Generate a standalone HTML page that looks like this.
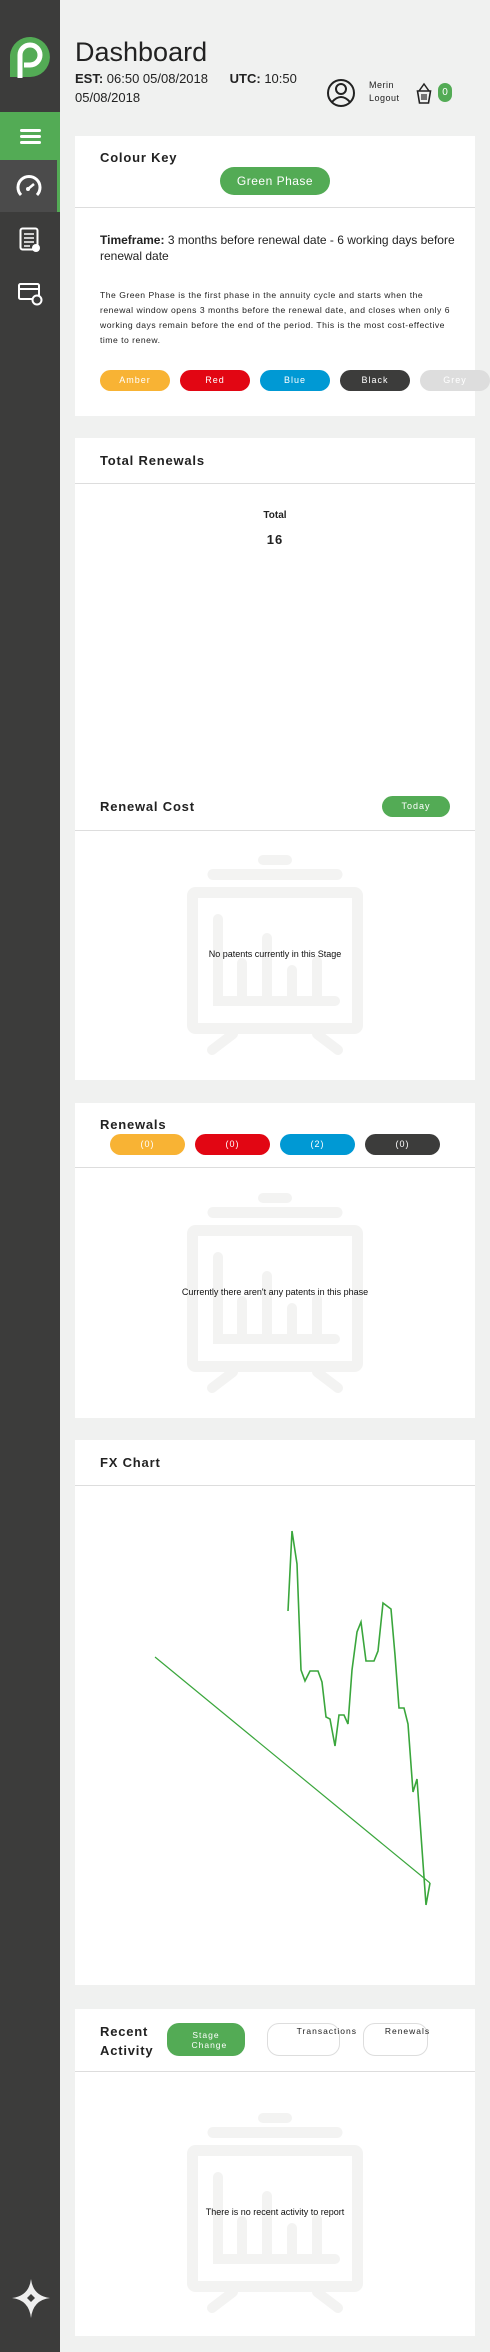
<!DOCTYPE html>
<html><head><meta charset="utf-8"><style>
*{margin:0;padding:0;box-sizing:border-box}
body{width:490px;height:2352px;background:#f0f1f0;font-family:"Liberation Sans",Arial,sans-serif;color:#222;position:relative;overflow:hidden}
.a{position:absolute}
.side{left:0;top:0;width:60px;height:2352px;background:#3c3c3b}
.card{position:absolute;left:75px;width:400px;background:#fff}
.t{position:absolute;font-weight:bold;font-size:13px;letter-spacing:0.8px;color:#222;white-space:nowrap}
.hr{position:absolute;left:0;width:400px;height:1px;background:#ddd}
.pill{position:absolute;border-radius:12px;color:#fff;text-align:center;font-size:9px;letter-spacing:1px}
.msg{position:absolute;left:0;width:400px;text-align:center;font-size:9px;color:#111}
</style></head><body>
<div class="a side"></div>
<svg class="a" style="left:10px;top:35px" width="40" height="43" viewBox="0 0 40 43">
<path d="M0 43V20A20 20 0 1 1 20 42H0Z" fill="#53ab55"/>
<path d="M10 43V20A10 10 0 1 1 20 30H14" fill="none" stroke="#fff" stroke-width="5"/>
</svg>
<div class="a" style="left:0;top:112px;width:60px;height:48px;background:#53ab55"></div>
<div class="a" style="left:20px;top:129px;width:21px;height:3px;background:#fff;border-radius:2px"></div>
<div class="a" style="left:20px;top:135px;width:21px;height:3px;background:#fff;border-radius:2px"></div>
<div class="a" style="left:20px;top:141px;width:21px;height:3px;background:#fff;border-radius:2px"></div>
<div class="a" style="left:0;top:160px;width:57px;height:52px;background:#4b4b4b"></div>
<div class="a" style="left:57px;top:160px;width:3px;height:52px;background:#53ab55"></div>
<svg class="a" style="left:16px;top:174px" width="26" height="24" viewBox="0 0 26 24"><path d="M5 21A11 11 0 1 1 21 21" fill="none" stroke="#fff" stroke-width="3"/><path d="M12 15L18 10" stroke="#fff" stroke-width="2.5"/><circle cx="12" cy="15" r="2" fill="#fff"/></svg>
<svg class="a" style="left:19px;top:227px" width="22" height="26" viewBox="0 0 22 26"><rect x="1.5" y="1.5" width="17" height="21" rx="2" fill="none" stroke="#fff" stroke-width="2"/><path d="M5 7h10M5 11h10M5 15h10M5 19h6" stroke="#fff" stroke-width="1.6"/><circle cx="17" cy="21" r="4" fill="#fff"/></svg>
<svg class="a" style="left:17px;top:282px" width="26" height="24" viewBox="0 0 26 24"><rect x="2" y="2" width="20" height="15" rx="1.5" fill="none" stroke="#fff" stroke-width="2"/><path d="M2 7h20" stroke="#fff" stroke-width="2"/><circle cx="20" cy="18" r="4.5" fill="#3c3c3b" stroke="#fff" stroke-width="2"/></svg>
<svg class="a" style="left:12px;top:2279px" width="38" height="39" viewBox="0 0 38 39"><path d="M19 0Q21 17 38 19Q21 21 19 39Q17 21 0 19Q17 17 19 0Z" fill="#eee"/><path d="M19 15L23 19L19 23L15 19Z" fill="#3c3c3b"/></svg>

<div class="a" style="left:75px;top:37px;font-size:27px;color:#222">Dashboard</div>
<div class="a" style="left:75px;top:69px;font-size:13px;color:#222;line-height:19px"><b>EST:</b> 06:50 05/08/2018 &nbsp;&nbsp;&nbsp;&nbsp;&nbsp;<b>UTC:</b> 10:50<br>05/08/2018</div>
<svg class="a" style="left:326px;top:78px" width="30" height="30" viewBox="0 0 30 30"><circle cx="15" cy="15" r="13" fill="none" stroke="#222" stroke-width="2"/><circle cx="15" cy="11" r="5" fill="none" stroke="#222" stroke-width="2"/><path d="M6 24Q15 14 24 24" fill="none" stroke="#222" stroke-width="2"/></svg>
<div class="a" style="left:369px;top:79px;font-size:9px;line-height:13px;color:#222;letter-spacing:0.5px">Merin<br>Logout</div>
<svg class="a" style="left:416px;top:82px" width="16" height="22" viewBox="0 0 16 22"><path d="M3 9L8 2L13 9" fill="none" stroke="#222" stroke-width="1.5"/><path d="M1.5 9h13l-2 12h-9Z" fill="none" stroke="#222" stroke-width="1.6"/><path d="M6 12v6M8 12v6M10 12v6" stroke="#222" stroke-width="1.2"/></svg>
<div class="a" style="left:438px;top:83px;width:14px;height:19px;border-radius:7px;background:#53ab55;color:#fff;font-size:10px;text-align:center;line-height:19px">0</div>

<!-- card1 -->
<div class="card" style="top:136px;height:280px">
<div class="t" style="left:25px;top:14px">Colour Key</div>
<div class="pill" style="left:145px;top:31px;width:110px;height:28px;line-height:28px;background:#53ab55;font-size:12px;border-radius:14px;letter-spacing:0.5px">Green Phase</div>
<div class="hr" style="top:71px"></div>
<div class="a" style="left:25px;top:96px;font-size:12px;line-height:16px;width:362px;color:#222"><b>Timeframe:</b> 3 months before renewal date - 6 working days before renewal date</div>
<div class="a" style="left:25px;top:152px;font-size:8.6px;line-height:15px;width:350px;color:#222;letter-spacing:0.5px">The Green Phase is the first phase in the annuity cycle and starts when the renewal window opens 3 months before the renewal date, and closes when only 6 working days remain before the end of the period. This is the most cost-effective time to renew.</div>
</div>
<div class="pill" style="left:100px;top:370px;width:70px;height:21px;line-height:21px;background:#f8b334">Amber</div>
<div class="pill" style="left:180px;top:370px;width:70px;height:21px;line-height:21px;background:#e20613">Red</div>
<div class="pill" style="left:260px;top:370px;width:70px;height:21px;line-height:21px;background:#0099d4">Blue</div>
<div class="pill" style="left:340px;top:370px;width:70px;height:21px;line-height:21px;background:#3c3c3b">Black</div>
<div class="pill" style="left:420px;top:370px;width:70px;height:21px;line-height:21px;background:#ddd">Grey</div>

<!-- card2 -->
<div class="card" style="top:438px;height:642px">
<div class="t" style="left:25px;top:15px">Total Renewals</div>
<div class="hr" style="top:45px"></div>
<div class="a" style="left:0;width:400px;top:72px;text-align:center;font-weight:bold;font-size:10px">Total</div>
<div class="a" style="left:0;width:400px;top:94px;text-align:center;font-weight:bold;font-size:13px;letter-spacing:1px">16</div>
<div class="t" style="left:25px;top:361px">Renewal Cost</div>
<div class="pill" style="left:307px;top:358px;width:68px;height:21px;line-height:21px;background:#53ab55">Today</div>
<div class="hr" style="top:392px"></div>
<svg class="a ic" style="left:112px;top:417px" width="176" height="200"><use href="#emp"/></svg>
<div class="msg" style="top:511px">No patents currently in this Stage</div>
</div>

<!-- card3 -->
<div class="card" style="top:1103px;height:315px">
<div class="t" style="left:25px;top:14px">Renewals</div>
<div class="pill" style="left:35px;top:31px;width:75px;height:21px;line-height:21px;background:#f8b334">(0)</div>
<div class="pill" style="left:120px;top:31px;width:75px;height:21px;line-height:21px;background:#e20613">(0)</div>
<div class="pill" style="left:205px;top:31px;width:75px;height:21px;line-height:21px;background:#0099d4">(2)</div>
<div class="pill" style="left:290px;top:31px;width:75px;height:21px;line-height:21px;background:#3c3c3b">(0)</div>
<div class="hr" style="top:64px"></div>
<svg class="a" style="left:112px;top:90px" width="176" height="200"><use href="#emp"/></svg>
<div class="msg" style="top:184px">Currently there aren't any patents in this phase</div>
</div>

<!-- FX -->
<div class="card" style="top:1440px;height:545px">
<div class="t" style="left:25px;top:15px">FX Chart</div>
<div class="hr" style="top:45px"></div>
</div>
<svg class="a" style="left:0;top:0" width="490" height="2352">
<defs>
<g id="emp" fill="none" stroke="#f3f3f2" stroke-linecap="round">
<path d="M76 5H100" stroke-width="10"/>
<path d="M26 19.5H150" stroke-width="11"/>
<rect x="5.5" y="37.5" width="165" height="136" rx="3" stroke-width="11"/>
<path d="M31 64V146H148" stroke-width="10"/>
<path d="M55 108V146M80 83V146M105 115V146M130 106V146" stroke-width="10"/>
<path d="M46 179L25 195M130 179L151 195" stroke-width="10"/>
</g>
</defs>
<path d="M155 1657L430 1883" stroke="#3aa63c" stroke-width="1.2" fill="none"/>
<polyline fill="none" stroke="#3aa63c" stroke-width="1.6" points="288,1611 292,1531 297,1564 301,1670 305,1681 310,1671 318,1671 322,1682 326,1717 330,1719 335,1746 339,1715 344,1715 348,1724 352,1670 357,1632 361,1622 366,1661 374,1661 378,1651 383,1603 391,1609 395,1655 399,1708 404,1708 408,1724 413,1792 417,1779 426,1905 430,1883"/>
</svg>

<!-- Recent -->
<div class="card" style="top:2009px;height:327px">
<div class="t" style="left:25px;top:13px;line-height:19px">Recent<br>Activity</div>
<div class="pill" style="left:92px;top:14px;width:78px;height:33px;background:#53ab55;font-size:8.5px;line-height:10px;padding-top:7px">Stage<br>&nbsp;&nbsp;Change</div>
<div class="pill" style="left:192px;top:14px;width:73px;height:33px;border:1px solid #ddd;color:#222;font-size:8.5px;line-height:14px;text-align:right;padding-right:0"><span style="position:relative;left:18px">Transactions</span></div>
<div class="pill" style="left:288px;top:14px;width:65px;height:33px;border:1px solid #ddd;color:#222;font-size:8.5px;line-height:14px"><span style="position:relative;left:12px">Renewals</span></div>
<div class="hr" style="top:62px"></div>
<svg class="a" style="left:112px;top:104px" width="176" height="200"><use href="#emp"/></svg>
<div class="msg" style="top:198px">There is no recent activity to report</div>
</div>
</body></html>
